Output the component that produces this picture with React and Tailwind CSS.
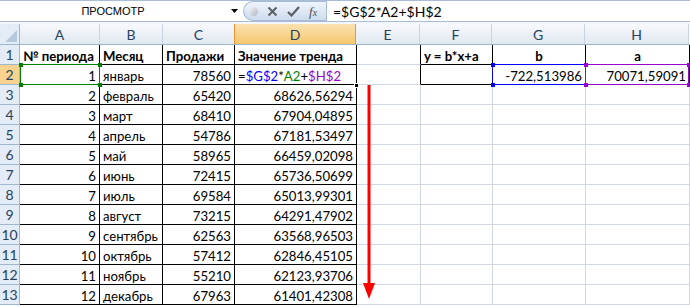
import React from "react";

const cols = [
  { id: "A", w: "w-[80px]" },
  { id: "B", w: "w-[63px]" },
  { id: "C", w: "w-[72px]" },
  { id: "D", w: "w-[122px]" },
  { id: "E", w: "w-[64px]" },
  { id: "F", w: "w-[72px]" },
  { id: "G", w: "w-[93px]" },
  { id: "H", w: "w-[104px]" },
];

const data = [
  [1, "январь", 78560, null],
  [2, "февраль", 65420, "68626,56294"],
  [3, "март", 68410, "67904,04895"],
  [4, "апрель", 54786, "67181,53497"],
  [5, "май", 58965, "66459,02098"],
  [6, "июнь", 72415, "65736,50699"],
  [7, "июль", 69584, "65013,99301"],
  [8, "август", 73215, "64291,47902"],
  [9, "сентябрь", 62563, "63568,96503"],
  [10, "октябрь", 57412, "62846,45105"],
  [11, "ноябрь", 55210, "62123,93706"],
  [12, "декабрь", 67963, "61401,42308"],
];

function Cell({ w, dark, children, className = "" }) {
  return (
    <div
      className={`${w} h-full shrink-0 border-r border-b px-[3px] flex items-end pb-[1px] leading-none overflow-visible whitespace-nowrap ${
        dark ? "border-r-black border-b-black" : "border-r-[#d0d7e5] border-b-[#d0d7e5]"
      } ${className}`}
    >
      {children}
    </div>
  );
}

function RowHead({ n, active }) {
  return (
    <div
      className={`w-[20px] h-full shrink-0 border-r border-b border-r-[#9eb6ce] border-b-[#9eb6ce] flex items-center justify-center text-[14px] text-[#27415f] ${
        active ? "bg-[#f7d38f]" : "bg-[#e4ecf7]"
      }`}
    >
      {n}
    </div>
  );
}

function Corner({ color }) {
  return (
    <>
      <span className={`absolute -left-[2.5px] -top-[2.5px] w-[4px] h-[4px] ${color}`} />
      <span className={`absolute -right-[2.5px] -top-[2.5px] w-[4px] h-[4px] ${color}`} />
      <span className={`absolute -left-[2.5px] -bottom-[2.5px] w-[4px] h-[4px] ${color}`} />
      <span className={`absolute -right-[2.5px] -bottom-[2.5px] w-[4px] h-[4px] ${color}`} />
    </>
  );
}

export default function App() {
  return (
    <div className="w-[690px] h-[307px] overflow-hidden bg-white font-['Lato',sans-serif] text-[13.2px] text-black">
      {/* formula bar */}
      <div className="h-[22px] flex border-t border-b border-[#a9bdd8] bg-white">
        <div className="w-[226px] flex items-center justify-center font-['Liberation_Sans',sans-serif] text-[11px] text-black">
          ПРОСМОТР
        </div>
        <div className="w-[17px] flex items-center justify-center">
          <svg width="7" height="4" viewBox="0 0 7 4">
            <path d="M0 0h7L3.5 4z" fill="#000" />
          </svg>
        </div>
        <div className="w-[83px] flex items-center gap-[9px] pl-[5px] rounded-l-full border border-r-0 border-[#a5bbd8] bg-gradient-to-b from-[#eef4fb] to-[#cfdcee]">
          <span className="w-[9px] h-[9px] rounded-full bg-gradient-to-br from-[#f5f5f5] to-[#aeb6c2]" />
          <svg width="11" height="11" viewBox="0 0 11 11">
            <path d="M1.5 1.5l8 8M9.5 1.5l-8 8" stroke="#5a5f66" strokeWidth="2" />
          </svg>
          <svg width="13" height="11" viewBox="0 0 13 11">
            <path d="M1 6l3.5 3.5L12 1" stroke="#5a5f66" strokeWidth="2.2" fill="none" />
          </svg>
          <span className="font-['Liberation_Serif',serif] italic text-[13px] text-[#4a4f55] leading-none">
            f<span className="text-[10px]">x</span>
          </span>
        </div>
        <div className="flex-1 border-l border-[#a5bbd8] flex items-center pl-[6px] text-[14px]">
          =$G$2*A2+$H$2
        </div>
      </div>
      <div className="h-[2px] bg-[#f3f6fa]" />

      {/* sheet */}
      <div className="relative">
        {/* column headers */}
        <div className="h-[21px] flex border-b border-[#9eb6ce]">
          <div className="w-[20px] shrink-0 border-r border-[#9eb6ce] bg-[#e4ecf7] relative">
            <svg className="absolute right-[2px] bottom-[2px]" width="12" height="12" viewBox="0 0 12 12">
              <path d="M12 0v12H0z" fill="#b6c8dd" />
            </svg>
          </div>
          {cols.map((c) => (
            <div
              key={c.id}
              className={`${c.w} shrink-0 border-r flex items-center justify-center text-[14px] text-[#27415f] ${
                c.id === "D"
                  ? "bg-gradient-to-b from-[#fbe2b2] to-[#f4c66c] border-r-[#f29436] border-l border-l-[#f29436] -ml-[1px]"
                  : "bg-gradient-to-b from-[#f7f9fc] to-[#e1e8f1] border-r-[#c5d3e3]"
              }`}
            >
              {c.id}
            </div>
          ))}
        </div>

        {/* row 1 */}
        <div className="h-[20px] flex">
          <RowHead n={1} />
          <Cell w="w-[80px]" dark className="font-bold">№ периода</Cell>
          <Cell w="w-[63px]" dark className="font-bold">Месяц</Cell>
          <Cell w="w-[72px]" dark className="font-bold">Продажи</Cell>
          <Cell w="w-[122px]" dark className="font-bold">Значение тренда</Cell>
          <Cell w="w-[64px]" className="border-r-black" />
          <Cell w="w-[72px]" dark className="font-bold">y = b*x+a</Cell>
          <Cell w="w-[93px]" dark className="font-bold justify-center">b</Cell>
          <Cell w="w-[104px]" dark className="font-bold justify-center">a</Cell>
        </div>

        {data.map((r, i) => (
          <div key={i} className="h-[20px] flex">
            <RowHead n={i + 2} active={i === 0} />
            <Cell w="w-[80px]" dark className="justify-end">{r[0]}</Cell>
            <Cell w="w-[63px]" dark>{r[1]}</Cell>
            <Cell w="w-[72px]" dark className="justify-end">{r[2]}</Cell>
            {r[3] === null ? (
              <Cell w="w-[122px]" dark>
                =<span className="text-[#0000ff]">$G$2</span>*<span className="text-[#008000]">A2</span>+
                <span className="text-[#9900cc]">$H$2</span>
              </Cell>
            ) : (
              <Cell w="w-[122px]" dark className="justify-end">{r[3]}</Cell>
            )}
            <Cell w="w-[64px]" className={i === 0 ? "border-r-black" : ""} />
            <Cell w="w-[72px]" dark={i === 0} />
            <Cell w="w-[93px]" dark={i === 0} className="justify-end">
              {i === 0 ? "-722,513986" : ""}
            </Cell>
            <Cell w="w-[104px]" dark={i === 0} className="justify-end">
              {i === 0 ? "70071,59091" : ""}
            </Cell>
          </div>
        ))}

        {/* range highlights */}
        <div className="absolute left-[20px] top-[40px] w-[80px] h-[21px] border border-[#008000]">
          <Corner color="bg-[#008000]" />
        </div>
        <div className="absolute left-[492px] top-[40px] w-[94px] h-[21px] border border-[#0000ff]">
          <Corner color="bg-[#0000ff]" />
        </div>
        <div className="absolute left-[585px] top-[40px] w-[104px] h-[21px] border border-[#9900cc]">
          <Corner color="bg-[#9900cc]" />
        </div>
        {/* active cell fill handle */}
        <span className="absolute left-[354px] top-[59px] w-[5px] h-[5px] bg-black border border-white" />

        {/* red arrow */}
        <svg className="absolute left-[362px] top-[61px]" width="14" height="216" viewBox="0 0 14 216">
          <path d="M5.5 0h3v202h-3z" fill="#ff0000" />
          <path d="M1 198h12l-6 16z" fill="#ff0000" />
        </svg>
      </div>
    </div>
  );
}
